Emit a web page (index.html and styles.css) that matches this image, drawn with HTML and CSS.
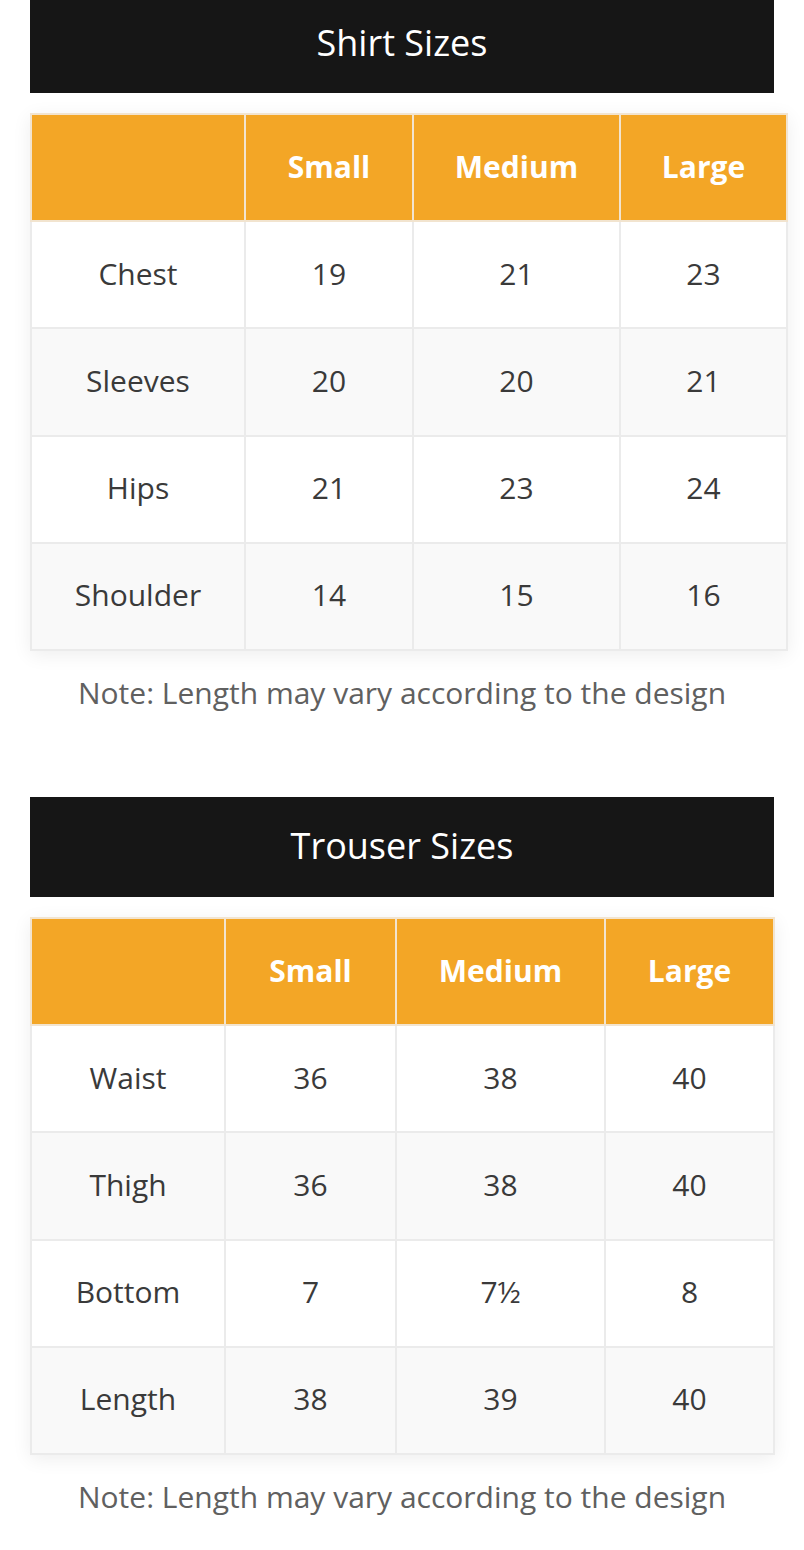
FILE: index.html
```html
<!DOCTYPE html>
<html lang="en">
<head>
<meta charset="utf-8">
<title>Size Chart</title>
<link rel="stylesheet" href="styles.css">
</head>
<body>
<div class="page">
  <section class="size-block first">
    <h2 class="title">Shirt Sizes</h2>
    <table class="chart shirt">
      <colgroup>
        <col class="c1"><col class="c2"><col class="c3"><col class="c4">
      </colgroup>
      <thead>
        <tr><th></th><th>Small</th><th>Medium</th><th>Large</th></tr>
      </thead>
      <tbody>
        <tr><td>Chest</td><td>19</td><td>21</td><td>23</td></tr>
        <tr><td>Sleeves</td><td>20</td><td>20</td><td>21</td></tr>
        <tr><td>Hips</td><td>21</td><td>23</td><td>24</td></tr>
        <tr><td>Shoulder</td><td>14</td><td>15</td><td>16</td></tr>
      </tbody>
    </table>
    <p class="note">Note: Length may vary according to the design</p>
  </section>

  <section class="size-block">
    <h2 class="title">Trouser Sizes</h2>
    <table class="chart trouser">
      <colgroup>
        <col class="c1"><col class="c2"><col class="c3"><col class="c4">
      </colgroup>
      <thead>
        <tr><th></th><th>Small</th><th>Medium</th><th>Large</th></tr>
      </thead>
      <tbody>
        <tr><td>Waist</td><td>36</td><td>38</td><td>40</td></tr>
        <tr><td>Thigh</td><td>36</td><td>38</td><td>40</td></tr>
        <tr><td>Bottom</td><td>7</td><td>7½</td><td>8</td></tr>
        <tr><td>Length</td><td>38</td><td>39</td><td>40</td></tr>
      </tbody>
    </table>
    <p class="note">Note: Length may vary according to the design</p>
  </section>
</div>
</body>
</html>
```

FILE: styles.css
```css
html, body {
  margin: 0;
  padding: 0;
  background: #ffffff;
}

body {
  font-family: "Open Sans", "Noto Sans", "Liberation Sans", sans-serif;
  color: #3a3a3a;
}

.page {
  padding: 0 30px;
}

.size-block {
  margin-bottom: 90px;
}

.size-block.first {
  margin-top: -7px;
}

.title {
  margin: 0;
  height: 100px;
  padding-bottom: 2px;
  box-sizing: border-box;
  background: #161616;
  color: #ffffff;
  display: flex;
  align-items: center;
  justify-content: center;
  font-size: 36px;
  font-weight: 500;
  width: 744px;
}

.chart {
  margin-top: 20px;
  border-collapse: collapse;
  table-layout: fixed;
  box-shadow: 0 4px 18px rgba(0, 0, 0, 0.07);
}

.chart.shirt { width: 756px; }
.chart.trouser { width: 743px; }

.shirt .c1 { width: 214px; }
.shirt .c2 { width: 168px; }
.shirt .c3 { width: 207px; }
.shirt .c4 { width: 167px; }

.trouser .c1 { width: 194px; }
.trouser .c2 { width: 171px; }
.trouser .c3 { width: 209px; }
.trouser .c4 { width: 169px; }

.chart tr {
  height: 107.2px;
}

.chart th,
.chart td {
  border: 2px solid #ebebeb;
  text-align: center;
  vertical-align: middle;
  padding: 0 0 3px;
}

.chart th {
  background: #f3a626;
  color: #ffffff;
  font-size: 30px;
  font-weight: 700;
  border-color: #f2e4cf;
}

.chart td {
  font-size: 30px;
  color: #3a3a3a;
  background: #ffffff;
}

.chart tbody tr:nth-child(even) td {
  background: #f9f9f9;
}

.note {
  margin: 28px 0 0;
  line-height: 28px;
  text-align: center;
  font-size: 30px;
  color: #606060;
  width: 744px;
}
```
